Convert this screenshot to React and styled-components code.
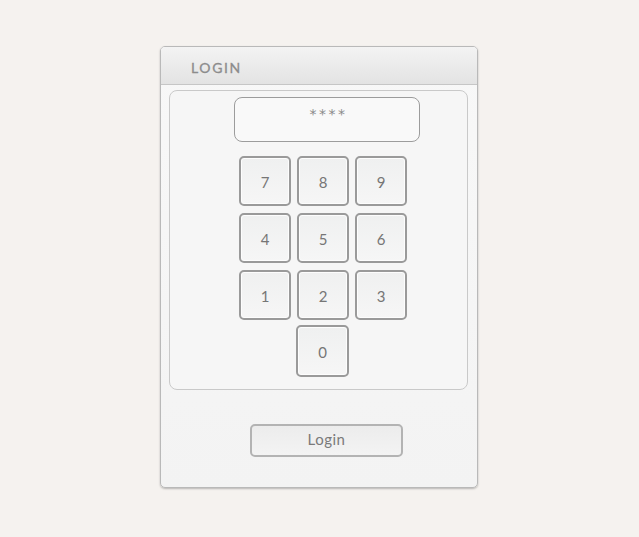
import React from 'react';
import styled, { createGlobalStyle } from 'styled-components';

const Global = createGlobalStyle`
  html, body {
    margin: 0;
    background: #f5f2ef;
    font-family: Lato, "Open Sans", sans-serif;
  }
`;

const Page = styled.div`
  height: 537px;
  padding-top: 46px;
  box-sizing: border-box;
`;

const Panel = styled.div`
  width: 318px;
  height: 442px;
  margin-left: 160px;
  box-sizing: border-box;
  border: 1px solid #b9b9b9;
  border-radius: 5px;
  background: linear-gradient(#f8f8f8, #f3f3f3);
  box-shadow: 0 1px 2px rgba(0, 0, 0, 0.25);
  overflow: hidden;
  display: flex;
  flex-direction: column;
`;

const Header = styled.div`
  height: 38px;
  flex-shrink: 0;
  display: flex;
  align-items: center;
  padding: 3px 0 0 30px;
  box-sizing: border-box;
  background: linear-gradient(#f3f3f3, #e3e3e3);
  border-bottom: 1px solid #c6c6c6;
  color: #8c8c8c;
  font-size: 14px;
  font-weight: 400;
  letter-spacing: 1.6px;
  -webkit-text-stroke: 0.3px #8c8c8c;
`;

const Inner = styled.div`
  margin: 5px 9px 0 8px;
  height: 300px;
  box-sizing: border-box;
  border: 1px solid #c9c9c9;
  border-radius: 8px;
  background: #f6f6f6;
  padding: 6px 0 0 64px;
`;

const Display = styled.div`
  width: 186px;
  height: 45px;
  box-sizing: border-box;
  border: 1px solid #9c9c9c;
  border-radius: 8px;
  background: #f9f9f9;
  text-align: center;
  color: #8a8a8a;
  font-family: "DejaVu Sans", sans-serif;
  font-size: 14px;
  letter-spacing: 2.5px;
  padding: 8px 0 0 3px;
`;

const Keypad = styled.div`
  display: grid;
  grid-template-columns: repeat(3, 52px);
  grid-auto-rows: 50px;
  column-gap: 6px;
  row-gap: 7px;
  margin: 14px 0 0 5px;
`;

const Key = styled.button`
  grid-column: ${(p) => p.col || 'auto'};
  margin-top: ${(p) => (p.col ? '-2px' : '0')};
  margin-left: ${(p) => (p.col ? '-1px' : '0')};
  box-sizing: border-box;
  border: 2px solid #9a9a9a;
  border-radius: 5px;
  background: linear-gradient(#eff0f0, #f6f6f6);
  box-shadow: inset 0 0 0 1px #fdfdfd;
  color: #767676;
  font-family: Lato, "Open Sans", sans-serif;
  font-size: 15px;
  padding: 2px 0 0;
`;

const Footer = styled.div`
  padding: 34px 0 0 89px;
`;

const LoginButton = styled.button`
  width: 153px;
  height: 33px;
  box-sizing: border-box;
  border: 2px solid #b3b3b3;
  border-radius: 5px;
  background: linear-gradient(#ececec, #f3f3f3);
  color: #7a7a7a;
  font-family: Lato, "Open Sans", sans-serif;
  font-size: 15px;
  letter-spacing: 0.5px;
  padding: 0 0 3px;
`;

const keys = ['7', '8', '9', '4', '5', '6', '1', '2', '3'];

export default function App() {
  return (
    <Page>
      <Global />
      <Panel>
        <Header>LOGIN</Header>
        <Inner>
          <Display>****</Display>
          <Keypad>
            {keys.map((k) => (
              <Key key={k}>{k}</Key>
            ))}
            <Key col={2}>0</Key>
          </Keypad>
        </Inner>
        <Footer>
          <LoginButton>Login</LoginButton>
        </Footer>
      </Panel>
    </Page>
  );
}
